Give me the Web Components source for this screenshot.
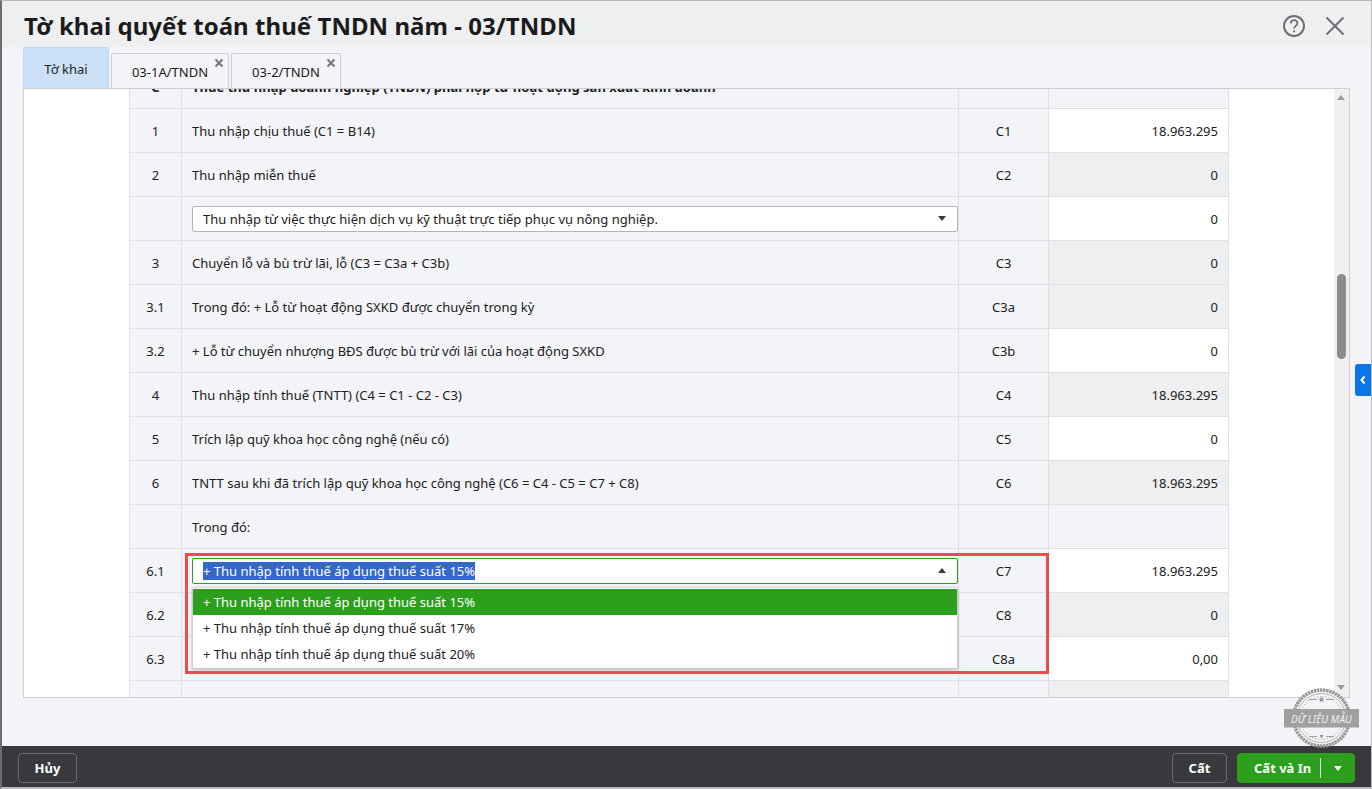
<!DOCTYPE html>
<html lang="vi"><head><meta charset="utf-8"><title>03/TNDN</title>
<style>
html,body{margin:0;padding:0;height:789px;overflow:hidden;background:#fff}
body{font:13px/18px "Noto Sans","DejaVu Sans",sans-serif;color:#212121}
</style></head><body>
<tax-dialog>
  <tax-tab slot="tabs" active label="Tờ khai"></tax-tab>
  <tax-tab slot="tabs" closable label="03-1A/TNDN" style="width:118px"></tax-tab>
  <tax-tab slot="tabs" closable label="03-2/TNDN" style="width:110px"></tax-tab>

  <tax-row no="C" label="Thuế thu nhập doanh nghiệp (TNDN) phải nộp từ hoạt động sản xuất kinh doanh" bold tone="plain"></tax-row>
  <tax-row no="1" label="Thu nhập chịu thuế (C1 = B14)" code="C1" value="18.963.295" tone="white"></tax-row>
  <tax-row no="2" label="Thu nhập miễn thuế" code="C2" value="0" tone="grey"></tax-row>
  <tax-row tone="white" value="0"><tax-select slot="control" text="Thu nhập từ việc thực hiện dịch vụ kỹ thuật trực tiếp phục vụ nông nghiệp."></tax-select></tax-row>
  <tax-row no="3" label="Chuyển lỗ và bù trừ lãi, lỗ (C3 = C3a + C3b)" code="C3" value="0" tone="grey"></tax-row>
  <tax-row no="3.1" label="Trong đó: + Lỗ từ hoạt động SXKD được chuyển trong kỳ" code="C3a" value="0" tone="grey"></tax-row>
  <tax-row no="3.2" label="+ Lỗ từ chuyển nhượng BĐS được bù trừ với lãi của hoạt động SXKD" code="C3b" value="0" tone="white"></tax-row>
  <tax-row no="4" label="Thu nhập tính thuế (TNTT) (C4 = C1 - C2 - C3)" code="C4" value="18.963.295" tone="grey"></tax-row>
  <tax-row no="5" label="Trích lập quỹ khoa học công nghệ (nếu có)" code="C5" value="0" tone="white"></tax-row>
  <tax-row no="6" label="TNTT sau khi đã trích lập quỹ khoa học công nghệ (C6 = C4 - C5 = C7 + C8)" code="C6" value="18.963.295" tone="grey"></tax-row>
  <tax-row label="Trong đó:" tone="plain"></tax-row>
  <tax-row no="6.1" code="C7" value="18.963.295" tone="white"><tax-select slot="control" open text="+ Thu nhập tính thuế áp dụng thuế suất 15%"></tax-select></tax-row>
  <tax-row no="6.2" code="C8" value="0" tone="grey"></tax-row>
  <tax-row no="6.3" code="C8a" value="0,00" tone="white"></tax-row>
  <tax-row tone="grey"></tax-row>
</tax-dialog>
<script>
function tpl(html){const t=document.createElement('template');t.innerHTML=html;return t}

const tabT=tpl(`<style>
:host{display:flex;box-sizing:border-box;position:relative;align-items:center;justify-content:center;height:35px;margin-top:6px;
 border:1px solid #cdced4;border-bottom:0;border-radius:2px 2px 0 0;background:#f3f4f8;color:#212121;padding-top:2px}
:host([active]){height:41px;margin-top:0;width:86px;background:#cce1f8;border-color:#c3d6ea;padding:2px 0 0}
svg{position:absolute;top:4px;right:4px}
</style><span id="l"></span><svg id="x" width="10" height="10" viewBox="0 0 10 10" fill="none" stroke="#75767c" stroke-width="2"><path d="M1.5 1.5l7 7M8.5 1.5l-7 7"/></svg>`);
customElements.define('tax-tab',class extends HTMLElement{connectedCallback(){
 const s=this.attachShadow({mode:'open'});s.append(tabT.content.cloneNode(true));
 s.getElementById('l').textContent=this.getAttribute('label');
 if(!this.hasAttribute('closable'))s.getElementById('x').remove();
}});

const selT=tpl(`<style>
:host{display:block;position:relative;width:766px;box-sizing:border-box}
.box{box-sizing:border-box;height:26px;background:#fff;border:1px solid #b4b5bb;border-radius:2px;display:flex;align-items:center;padding:0 11px 0 10px;justify-content:space-between;color:#212121}
:host([open]) .box{border-color:#2c9f1c}
.tx{line-height:18px}
:host([open]) .tx{background:#3367c8;color:#fff}
.ar{width:0;height:0;border:4.5px solid transparent;border-top:5px solid #38393d;border-bottom:0}
:host([open]) .ar{border-top:0;border-bottom:5px solid #38393d}
ul{display:none;position:absolute;left:0;top:29px;width:766px;box-sizing:border-box;margin:0;padding:1px 0 1px;list-style:none;background:#fff;border:1px solid #cdced4;border-top-color:#dcdde0;border-radius:2px;box-shadow:0 1px 3px rgba(0,0,0,.25);z-index:5}
:host([open]) ul{display:block}
li{height:26px;line-height:26px;padding-left:10px}
li.on{background:#2c9f1c;color:#fff}
</style><div class="box"><span class="tx"></span><span class="ar"></span></div>
<ul><li class="on">+ Thu nhập tính thuế áp dụng thuế suất 15%</li><li>+ Thu nhập tính thuế áp dụng thuế suất 17%</li><li>+ Thu nhập tính thuế áp dụng thuế suất 20%</li></ul>`);
customElements.define('tax-select',class extends HTMLElement{connectedCallback(){
 const s=this.attachShadow({mode:'open'});s.append(selT.content.cloneNode(true));
 s.querySelector('.tx').textContent=this.getAttribute('text');
}});

const rowT=tpl(`<style>
:host{display:grid;grid-template-columns:53px 777px 90px 180px;width:1100px;height:44px;box-sizing:border-box;position:relative}
.c{box-sizing:border-box;border-bottom:1px solid #dfe0e4;border-right:1px solid #dfe0e4;background:#f3f4f8;display:flex;align-items:center;min-width:0}
.no,.code{justify-content:center}
.no{border-left:1px solid #dfe0e4}
.lb{padding-left:10px}
.val{justify-content:flex-end;padding-right:10px;background:var(--v)}
:host([bold]) .lb,:host([bold]) .no{font-weight:700;letter-spacing:.027px}
</style><div class="c no"><span id="n"></span></div><div class="c lb"><span id="t"></span><slot name="control"></slot></div><div class="c code"><span id="k"></span></div><div class="c val"><span id="v"></span></div>`);
const tones={white:'#fff',grey:'#eeeff1',plain:'#f3f4f8'};
customElements.define('tax-row',class extends HTMLElement{connectedCallback(){
 const s=this.attachShadow({mode:'open'});s.append(rowT.content.cloneNode(true));
 const g=a=>this.getAttribute(a)||'';
 s.getElementById('n').textContent=g('no');s.getElementById('t').textContent=g('label');
 s.getElementById('k').textContent=g('code');s.getElementById('v').textContent=g('value');
 this.style.setProperty('--v',tones[g('tone')]||'#fff');
 if(this.querySelector('[open]'))this.style.zIndex=5;
}});

const btnT=tpl(`<style>
:host{display:inline-flex;align-items:center;justify-content:center;box-sizing:border-box;height:30px;border:1px solid #68696e;border-radius:4px;color:#fff;font-weight:700}
:host([primary]){background:#2c9f1c;border-color:#2c9f1c;justify-content:flex-start}
.sp{width:1px;height:20px;background:#fff;margin:0 13px 0 9px}
.ar{width:0;height:0;border:4.5px solid transparent;border-top:5px solid #fff;border-bottom:0}
.t{display:block}
:host([primary]) .t{margin-left:16px}
</style><span class="t"><slot></slot></span>`);
customElements.define('tax-button',class extends HTMLElement{connectedCallback(){
 const s=this.attachShadow({mode:'open'});s.append(btnT.content.cloneNode(true));
 if(this.hasAttribute('primary')){const a=document.createElement('span');a.className='sp';const b=document.createElement('span');b.className='ar';s.append(a,b)}
}});

const stampT=tpl(`<style>:host{display:block;position:absolute;left:1282px;top:685px;width:76px;height:66px;pointer-events:none;z-index:9}svg{display:block}</style>
<svg width="76" height="66" viewBox="0 0 76 66">
<circle cx="37.500" cy="32" r="28" fill="#f3f4f8" stroke="#979797" stroke-width="3.500" stroke-dasharray="2.400 .7"/>
<circle cx="37.500" cy="32" r="24.500" fill="none" stroke="#b4b4b4" stroke-width="1"/>
<circle cx="37.500" cy="32" r="21.500" fill="none" stroke="#8f8f8f" stroke-width="1" stroke-dasharray="1 2"/>
<path d="M25 13.500h8M42 13.500h8M25 50.500h8M42 50.500h8" stroke="#a0a0a0" stroke-width="1"/>
<path d="M37.500 10.500l.9 2 2.100.2-1.600 1.400.5 2.100-1.900-1.100-1.900 1.100.5-2.100-1.600-1.400 2.100-.2z" fill="#8f8f8f"/>
<path d="M35.500 49h4l-2 3.500z" fill="#8f8f8f"/>
<rect x="0" y="23" width="75" height="18.500" fill="#a0a0a0"/>
<text x="37.500" y="36.500" text-anchor="middle" fill="#f0f0f0" font-family="Noto Sans" font-style="italic" font-size="10" letter-spacing=".1">DỮ LIỆU MẪU</text>
</svg>`);
customElements.define('tax-stamp',class extends HTMLElement{connectedCallback(){
 this.attachShadow({mode:'open'}).append(stampT.content.cloneNode(true));
}});

const dlgT=tpl(`<style>
:host{display:flex;flex-direction:column;box-sizing:border-box;position:relative;width:1372px;height:789px;background:#f3f4f8;border:solid #b8b9bb;border-width:1px 1px 2px 2px;border-left-color:#6c6d70;overflow:hidden}
header{flex:none;height:46px;background:#eeeff1;display:flex;align-items:center;padding:0 25px 0 22px}
h1{margin:0;flex:1;font-size:24px;line-height:32px;font-weight:700;letter-spacing:.05px;color:#1b1b1b;position:relative;top:2px}
.ic{display:flex;gap:18px;align-items:center;position:relative;top:2px}
.tabs{position:absolute;left:21px;top:46px;display:flex;gap:2px;z-index:3}
main{flex:none;margin:41px 0 0 21px;height:610px;width:1327px;box-sizing:border-box;border:1px solid #cdced4;background:#fff;display:flex;overflow:hidden;position:relative}
.scroll{flex:1;overflow:hidden;padding-left:105px;min-width:0}
.inner{margin-top:-24px;width:1100px}
.bar{flex:none;width:15px;background:#f0f0f0;position:relative}
.up,.dn{position:absolute;left:3px;width:0;height:0;border:4.5px solid transparent}
.up{top:6px;border-top:0;border-bottom:5px solid #9b9b9b}
.dn{bottom:7px;border-bottom:0;border-top:5px solid #9b9b9b}
.thumb{position:absolute;top:185px;left:3px;width:9px;height:85px;border-radius:5px;background:#8c8c8c}
.hl{position:absolute;left:183px;top:552px;width:864px;height:121px;box-sizing:border-box;border:3px solid #ea4d4a;z-index:8;pointer-events:none}
.side{position:absolute;right:0;top:363px;width:16px;height:32px;background:#0a76e8;border-radius:3px 0 0 3px;display:flex;align-items:center;justify-content:center}
footer{flex:none;box-sizing:border-box;margin-top:48px;height:41px;background:#38393d;display:flex;align-items:center;justify-content:space-between;padding:3px 16px 0 16px}
.r{display:flex;gap:10px}
</style>
<header><h1>Tờ khai quyết toán thuế TNDN năm - 03/TNDN</h1><div class="ic">
<svg width="24" height="24" viewBox="0 0 24 24" fill="none" stroke="#6e6f75" stroke-width="2"><circle cx="12" cy="12" r="10"/><path d="M8.800 9.400c.2-4.200 6.600-4.200 6.600-.2 0 2.700-3.300 2.600-3.300 5.300" stroke-width="1.800"/><circle cx="12.100" cy="17.300" r="1.100" fill="#6e6f75" stroke="none"/></svg>
<svg width="22" height="22" viewBox="0 0 22 22" fill="none" stroke="#6e6f75" stroke-width="2"><path d="M2.500 2.500l17 17M19.500 2.500l-17 17"/></svg></div></header>
<div class="tabs"><slot name="tabs"></slot></div>
<main><div class="scroll"><div class="inner"><slot></slot></div></div><div class="bar"><i class="up"></i><i class="thumb"></i><i class="dn"></i></div></main>
<div class="hl"></div>
<div class="side"><svg width="8" height="10" viewBox="0 0 8 10" fill="none" stroke="#fff" stroke-width="2"><path d="M5.500 1.500L2.500 5l3 3.500"/></svg></div>
<tax-stamp></tax-stamp>
<footer><tax-button style="width:59px">Hủy</tax-button><div class="r"><tax-button style="width:55px">Cất</tax-button><tax-button primary style="width:118px">Cất và In</tax-button></div></footer>`);
customElements.define('tax-dialog',class extends HTMLElement{connectedCallback(){
 this.attachShadow({mode:'open'}).append(dlgT.content.cloneNode(true));
}});
</script>
</body></html>
